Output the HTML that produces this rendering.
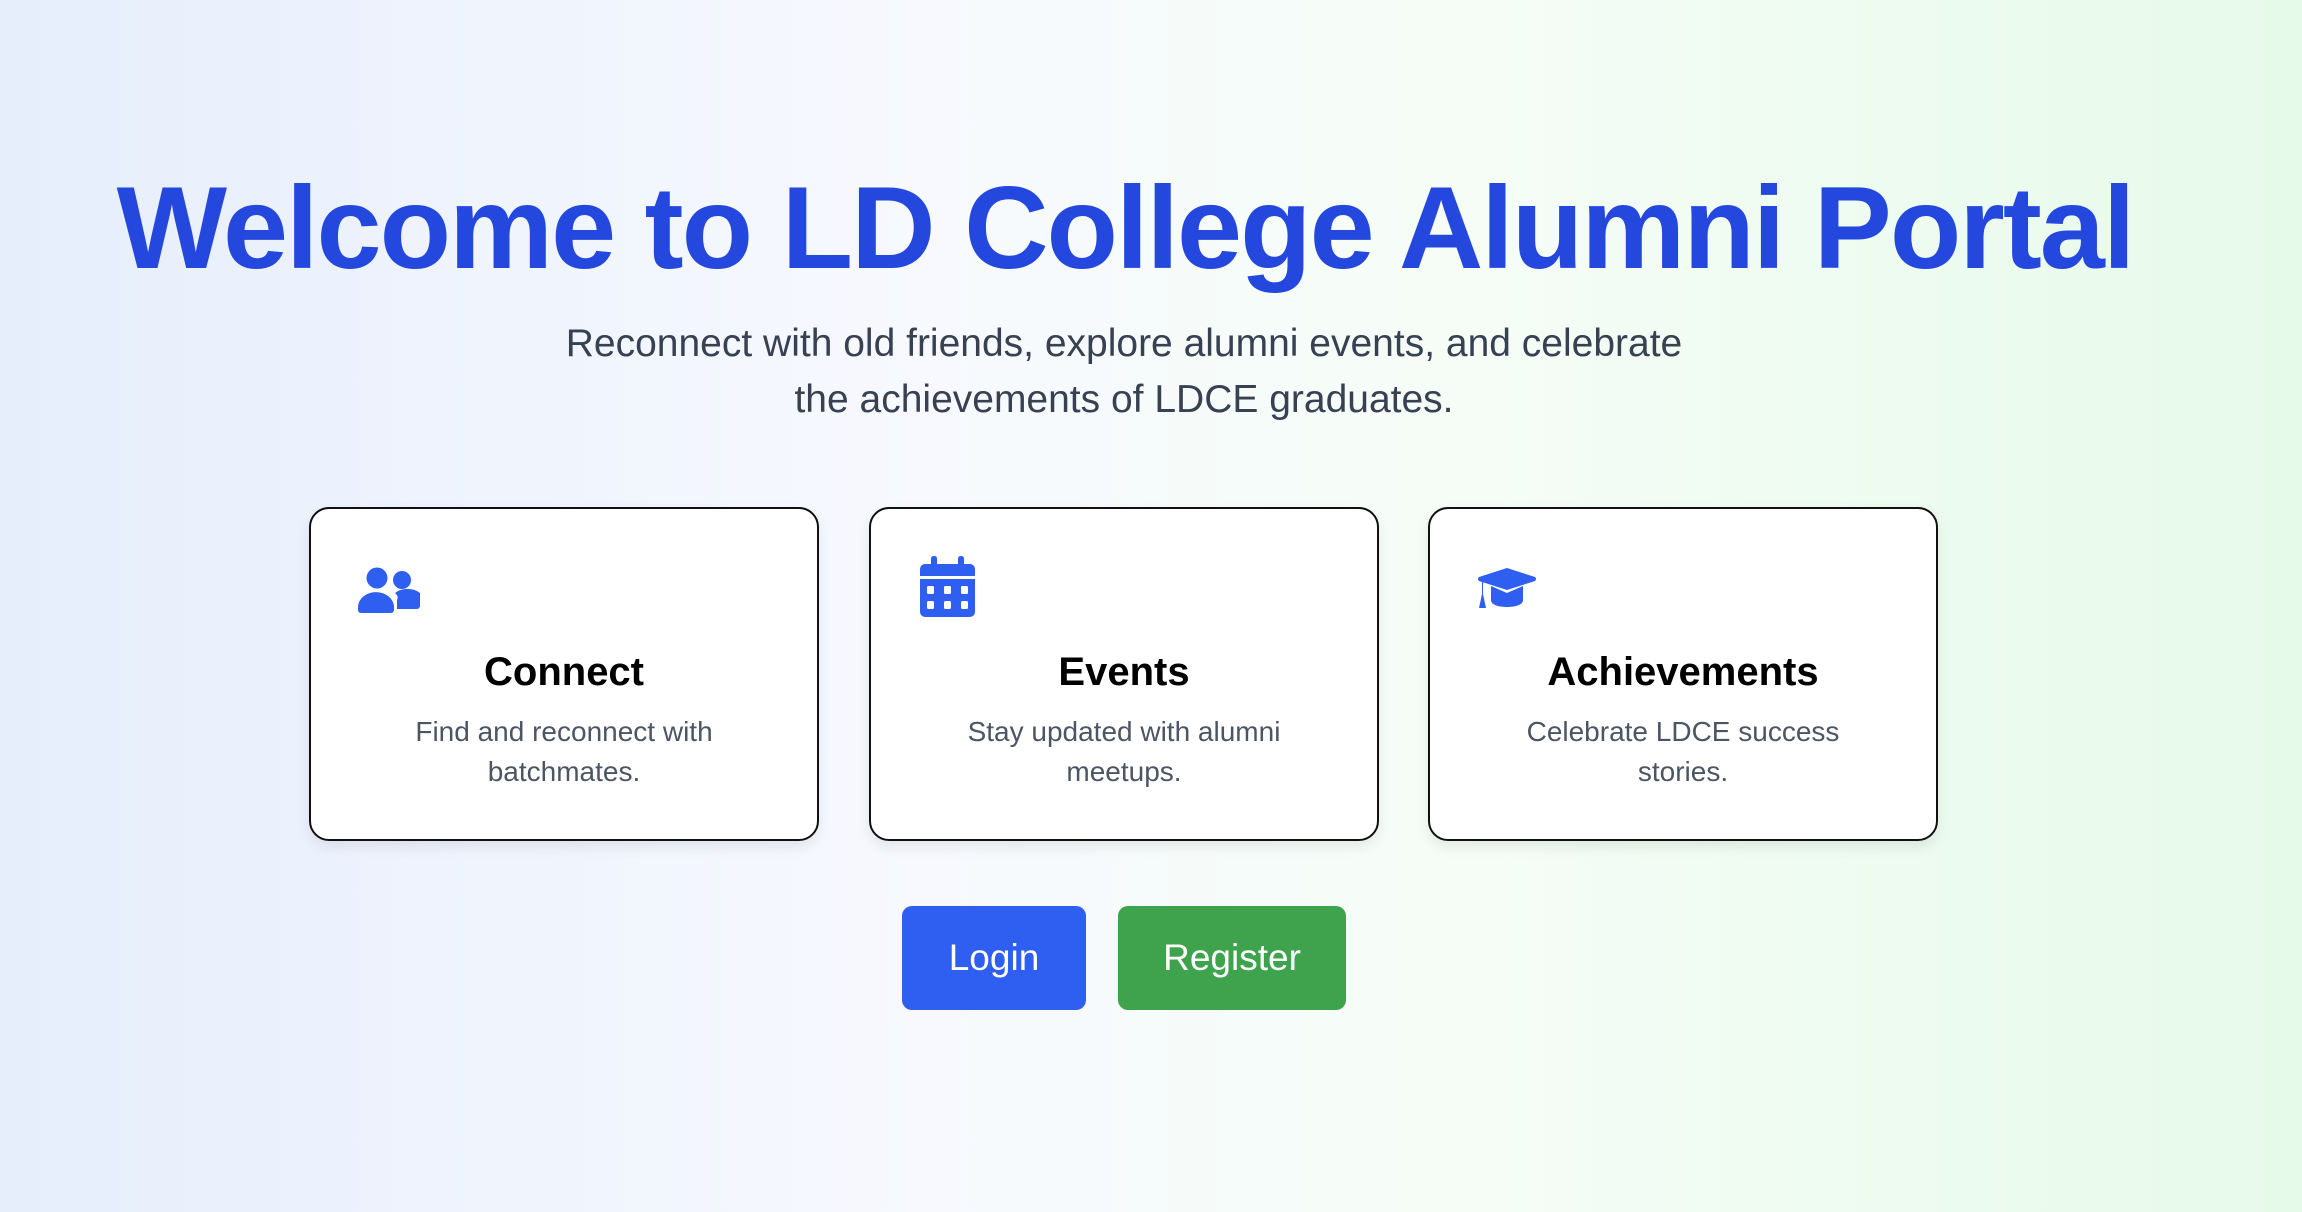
<!DOCTYPE html>
<html><head><meta charset="utf-8"><style>
*{margin:0;padding:0;box-sizing:border-box}
html,body{width:2302px;height:1212px;overflow:hidden}
body{font-family:"Liberation Sans",sans-serif;background:linear-gradient(90deg,#e6eefc 0%,#f7f9fe 40%,#f6fdf7 62%,#e6faea 100%);position:relative}
h1{position:absolute;left:-26px;width:2302px;top:153px;text-align:center;font-size:117px;font-weight:700;color:#2447de;letter-spacing:-2px;line-height:150px;white-space:nowrap}
.sub{position:absolute;left:-27px;width:2302px;top:316px;text-align:center;font-size:39px;line-height:56px;color:#374151}
.card{position:absolute;top:507px;width:510px;height:334px;background:#fff;border:2px solid #111;border-radius:20px;box-shadow:0 6px 14px rgba(0,0,0,.08);text-align:center}
.card svg{position:absolute}
.card h2{position:absolute;left:0;right:0;top:139px;font-size:40px;font-weight:700;color:#000;line-height:48px}
.card p{position:absolute;left:60px;right:60px;top:203px;font-size:28px;line-height:40px;color:#4b5563}
.btn{position:absolute;top:906px;height:104px;border-radius:10px;color:#fff;font-size:37px;line-height:104px;text-align:center}
</style></head><body>
<h1>Welcome to LD College Alumni Portal</h1>
<div class="sub">Reconnect with old friends, explore alumni events, and celebrate<br>the achievements of LDCE graduates.</div>

<div class="card" style="left:309px">
<svg style="left:47px;top:58px" width="62" height="46" viewBox="0 0 62 46"><circle cx="19" cy="11" r="10.5" fill="#2f5ff0"/><circle cx="44" cy="13" r="9" fill="#2f5ff0"/><path d="M0 40a17 14 0 0 1 36 0v3a3 3 0 0 1-3 3H3a3 3 0 0 1-3-3z" fill="#2f5ff0"/><path d="M39 42V33a14 8 0 0 0-2-7a15 9 0 0 1 25 10v3a3 3 0 0 1-3 3z" fill="#2f5ff0"/></svg>
<h2>Connect</h2><p>Find and reconnect with batchmates.</p></div>

<div class="card" style="left:869px">
<svg style="left:49px;top:47px" width="55" height="61" viewBox="0 0 55 61"><rect x="11" y="0" width="6" height="11" rx="2.5" fill="#2f5ff0"/><rect x="38" y="0" width="6" height="11" rx="2.5" fill="#2f5ff0"/><path d="M5 8h45a5 5 0 0 1 5 5v7H0v-7a5 5 0 0 1 5-5z" fill="#2f5ff0"/><path d="M0 23h55v33a5 5 0 0 1-5 5H5a5 5 0 0 1-5-5z" fill="#2f5ff0"/><g fill="#fff"><rect x="7" y="30" width="7" height="8" rx="1.5"/><rect x="24" y="30" width="7" height="8" rx="1.5"/><rect x="41" y="30" width="7" height="8" rx="1.5"/><rect x="7" y="45" width="7" height="8" rx="1.5"/><rect x="24" y="45" width="7" height="8" rx="1.5"/><rect x="41" y="45" width="7" height="8" rx="1.5"/></g></svg>
<h2>Events</h2><p>Stay updated with alumni meetups.</p></div>

<div class="card" style="left:1428px">
<svg style="left:47px;top:59px" width="60" height="40" viewBox="0 0 60 40"><path d="M30 0L58 9a2.5 2.5 0 0 1 0 4L30 22L2 13a2.5 2.5 0 0 1 0-4z" fill="#2f5ff0"/><path d="M14 18l16 7l16-7v14c0 5-8 7-16 7s-16-2-16-7z" fill="#2f5ff0"/><path d="M5 13v13l-3 14h7l-3-14V13z" fill="#2f5ff0"/></svg>
<h2>Achievements</h2><p>Celebrate LDCE success stories.</p></div>

<div class="btn" style="left:902px;width:184px;background:#2f5ff0">Login</div>
<div class="btn" style="left:1118px;width:228px;background:#3fa34d">Register</div>
</body></html>
